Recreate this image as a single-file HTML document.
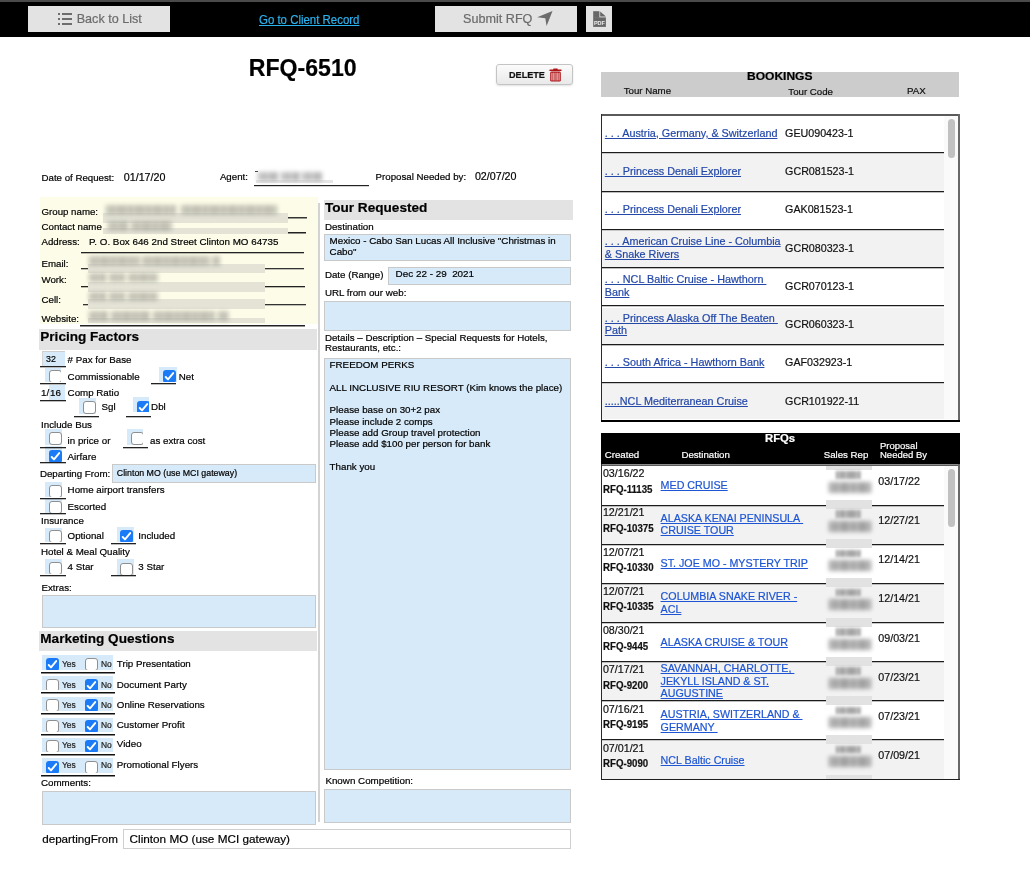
<!DOCTYPE html>
<html><head><meta charset="utf-8">
<style>
html,body{margin:0;padding:0;}
body{will-change:transform;width:1030px;height:870px;overflow:hidden;position:relative;background:#fff;font-family:"Liberation Sans",sans-serif;}
.t{position:absolute;white-space:nowrap;-webkit-text-stroke:0.2px currentColor;font-family:"Liberation Sans",sans-serif;}
a{color:inherit}
</style></head><body>
<div style="position:absolute;left:0px;top:0px;width:1030px;height:2px;background:#4a4a4a"></div><div style="position:absolute;left:0px;top:2px;width:1030px;height:35px;background:#000"></div><div style="position:absolute;left:28px;top:6px;width:142px;height:26px;background:#e3e3e3"></div><div style="position:absolute;left:58px;top:13px;width:2px;height:2px;background:#6e6e6e"></div><div style="position:absolute;left:62px;top:13px;width:10px;height:2px;background:#6e6e6e"></div><div style="position:absolute;left:58px;top:18px;width:2px;height:2px;background:#6e6e6e"></div><div style="position:absolute;left:62px;top:18px;width:10px;height:2px;background:#6e6e6e"></div><div style="position:absolute;left:58px;top:23px;width:2px;height:2px;background:#6e6e6e"></div><div style="position:absolute;left:62px;top:23px;width:10px;height:2px;background:#6e6e6e"></div><div class="t" style="left:76.7px;top:13.03px;font-size:12.6px;line-height:12.6px;font-weight:400;color:#6b6b6b;">Back to List</div><div class="t" style="left:259px;top:14.02px;font-size:12.5px;line-height:12.5px;font-weight:400;color:#2cb3ef;text-decoration:underline;transform:scaleX(0.915);transform-origin:0 0;">Go to Client Record</div><div style="position:absolute;left:435px;top:6px;width:142px;height:26px;background:#e3e3e3"></div><div class="t" style="left:463.1px;top:13.03px;font-size:12.6px;line-height:12.6px;font-weight:400;color:#6b6b6b;">Submit RFQ</div><svg style="position:absolute;left:535px;top:9px" width="20" height="20" viewBox="0 0 20 20"><path d="M17.5 2 L2.2 8.3 L10.3 9.2 L11.6 16.9 Z" fill="#6b6b6b"/></svg><div style="position:absolute;left:586px;top:6px;width:26px;height:26px;background:#e3e3e3"></div><svg style="position:absolute;left:593px;top:11px" width="14" height="17" viewBox="0 0 14 17"><rect x="0.2" y="0.2" width="6.2" height="6.6" fill="#676767"/><path d="M7.2 0.6 L7.2 5.6 L12.9 5.6 Z" fill="#676767"/><rect x="0.2" y="6.4" width="12.7" height="9.5" fill="#676767"/><text x="0.9" y="13.7" textLength="11" lengthAdjust="spacingAndGlyphs" font-family="Liberation Sans" font-size="6.2" font-weight="700" fill="#ececec">PDF</text></svg><div class="t" style="left:248.8px;top:56.65px;font-size:23.1px;line-height:23.1px;font-weight:700;color:#000;">RFQ-6510</div><div style="position:absolute;left:496px;top:64px;width:75px;height:19px;border:1px solid #c4c4c4;border-radius:3px;background:linear-gradient(#fbfbfb,#e9e9e9);box-shadow:0 1px 2px rgba(0,0,0,0.12)"></div><div class="t" style="left:509px;top:70.50px;font-size:9.1px;line-height:9.1px;font-weight:700;color:#111;">DELETE</div><svg style="position:absolute;left:548.5px;top:67.5px" width="14" height="15" viewBox="0 0 14 15"><rect x="4.2" y="0.6" width="4.6" height="1.6" rx="0.7" fill="#ae1519"/><rect x="0.4" y="1.5" width="12.2" height="1.5" rx="0.6" fill="#ae1519"/><rect x="1.2" y="3.6" width="10.6" height="10" rx="1.4" fill="#ae1519"/><rect x="5.6" y="4.6" width="1.9" height="8" fill="#cf6b6d"/><rect x="2.5" y="4.6" width="0.9" height="8" rx="0.4" fill="#fbeaea"/><rect x="4.4" y="4.6" width="0.9" height="8" rx="0.4" fill="#fbeaea"/><rect x="7.7" y="4.6" width="0.9" height="8" rx="0.4" fill="#fbeaea"/><rect x="9.6" y="4.6" width="0.9" height="8" rx="0.4" fill="#fbeaea"/></svg><div class="t" style="left:41.5px;top:173.09px;font-size:9.7px;line-height:9.7px;font-weight:400;color:#000;">Date of Request:</div><div class="t" style="left:123.8px;top:171.94px;font-size:10.7px;line-height:10.7px;font-weight:400;color:#000;">01/17/20</div><div class="t" style="left:219.9px;top:172.39px;font-size:9.7px;line-height:9.7px;font-weight:400;color:#000;">Agent:</div><div style="position:absolute;left:254px;top:185px;width:115px;height:1px;background:#222"></div><div style="position:absolute;left:254px;top:186px;width:115px;height:1px;background:#222;opacity:0.20"></div><div style="position:absolute;left:256px;top:180px;width:77px;height:3px;background:#e6e6e6"></div><div style="position:absolute;left:255px;top:171px;width:3px;height:1px;background:#444"></div><div style="position:absolute;left:258px;top:172px;width:20px;height:9px;background:repeating-linear-gradient(90deg,#8d8d8d 0 2.2px,#cfcfcf 2.2px 3.6px);filter:blur(1.9px);opacity:0.7"></div><div style="position:absolute;left:281px;top:172px;width:19px;height:9px;background:repeating-linear-gradient(90deg,#8d8d8d 0 2.2px,#cfcfcf 2.2px 3.6px);filter:blur(1.9px);opacity:0.7"></div><div style="position:absolute;left:302px;top:172px;width:20px;height:9px;background:repeating-linear-gradient(90deg,#8d8d8d 0 2.2px,#cfcfcf 2.2px 3.6px);filter:blur(1.9px);opacity:0.7"></div><div class="t" style="left:375.6px;top:172.49px;font-size:9.7px;line-height:9.7px;font-weight:400;color:#000;">Proposal Needed by:</div><div class="t" style="left:474.9px;top:171.34px;font-size:10.7px;line-height:10.7px;font-weight:400;color:#000;">02/07/20</div><div style="position:absolute;left:40px;top:197px;width:277.6px;height:127px;background:#fdfce9"></div><div class="t" style="left:41.5px;top:206.59px;font-size:9.7px;line-height:9.7px;font-weight:400;color:#000;">Group name:</div><div class="t" style="left:41.5px;top:221.99px;font-size:9.7px;line-height:9.7px;font-weight:400;color:#000;">Contact name</div><div class="t" style="left:41.5px;top:237.49px;font-size:9.7px;line-height:9.7px;font-weight:400;color:#000;">Address:</div><div class="t" style="left:89.1px;top:237.40px;font-size:9.8px;line-height:9.8px;font-weight:400;color:#000;">P. O. Box 646 2nd Street Clinton MO 64735</div><div style="position:absolute;left:103px;top:213px;width:185px;height:10px;background:#e4e3d6"></div><div style="position:absolute;left:103px;top:228px;width:185px;height:5.5px;background:#e4e3d6"></div><div style="position:absolute;left:106px;top:204.5px;width:70px;height:10px;background:repeating-linear-gradient(90deg,#8e8d84 0 2.2px,#c4c3b8 2.2px 3.6px);filter:blur(2.1px);opacity:0.62"></div><div style="position:absolute;left:181px;top:204.5px;width:96px;height:10px;background:repeating-linear-gradient(90deg,#8e8d84 0 2.2px,#c4c3b8 2.2px 3.6px);filter:blur(2.1px);opacity:0.62"></div><div style="position:absolute;left:108px;top:221px;width:20px;height:10px;background:repeating-linear-gradient(90deg,#8e8d84 0 2.2px,#c4c3b8 2.2px 3.6px);filter:blur(2.1px);opacity:0.62"></div><div style="position:absolute;left:131px;top:221px;width:41px;height:10px;background:repeating-linear-gradient(90deg,#8e8d84 0 2.2px,#c4c3b8 2.2px 3.6px);filter:blur(2.1px);opacity:0.62"></div><div style="position:absolute;left:288px;top:217px;width:19px;height:1px;background:#333"></div><div style="position:absolute;left:288px;top:218px;width:19px;height:1px;background:#333;opacity:0.50"></div><div style="position:absolute;left:288px;top:232px;width:18px;height:1px;background:#222"></div><div style="position:absolute;left:288px;top:233px;width:18px;height:1px;background:#222;opacity:0.50"></div><div style="position:absolute;left:81px;top:252px;width:223px;height:1px;background:#222"></div><div style="position:absolute;left:81px;top:253px;width:223px;height:1px;background:#222;opacity:0.30"></div><div class="t" style="left:41.5px;top:259.19px;font-size:9.7px;line-height:9.7px;font-weight:400;color:#000;">Email:</div><div class="t" style="left:41.5px;top:275.19px;font-size:9.7px;line-height:9.7px;font-weight:400;color:#000;">Work:</div><div class="t" style="left:41.5px;top:294.59px;font-size:9.7px;line-height:9.7px;font-weight:400;color:#000;">Cell:</div><div class="t" style="left:41.5px;top:313.89px;font-size:9.7px;line-height:9.7px;font-weight:400;color:#000;">Website:</div><div style="position:absolute;left:88px;top:254px;width:177px;height:69px;background:#fdfce9"></div><div style="position:absolute;left:88px;top:264px;width:177px;height:9px;background:#e4e3d6"></div><div style="position:absolute;left:88px;top:282px;width:177px;height:10px;background:#e4e3d6"></div><div style="position:absolute;left:88px;top:299px;width:177px;height:9.5px;background:#e4e3d6"></div><div style="position:absolute;left:88px;top:318px;width:177px;height:5px;background:#e4e3d6"></div><div style="position:absolute;left:89px;top:256px;width:51px;height:10px;background:repeating-linear-gradient(90deg,#8e8d84 0 2.2px,#c4c3b8 2.2px 3.6px);filter:blur(2.1px);opacity:0.62"></div><div style="position:absolute;left:142px;top:256px;width:68px;height:10px;background:repeating-linear-gradient(90deg,#8e8d84 0 2.2px,#c4c3b8 2.2px 3.6px);filter:blur(2.1px);opacity:0.62"></div><div style="position:absolute;left:212px;top:256px;width:8px;height:10px;background:repeating-linear-gradient(90deg,#8e8d84 0 2.2px,#c4c3b8 2.2px 3.6px);filter:blur(2.1px);opacity:0.62"></div><div style="position:absolute;left:89px;top:272.5px;width:17px;height:9.5px;background:repeating-linear-gradient(90deg,#8e8d84 0 2.2px,#c4c3b8 2.2px 3.6px);filter:blur(2.1px);opacity:0.62"></div><div style="position:absolute;left:109px;top:272.5px;width:16px;height:9.5px;background:repeating-linear-gradient(90deg,#8e8d84 0 2.2px,#c4c3b8 2.2px 3.6px);filter:blur(2.1px);opacity:0.62"></div><div style="position:absolute;left:128px;top:272.5px;width:30px;height:9.5px;background:repeating-linear-gradient(90deg,#8e8d84 0 2.2px,#c4c3b8 2.2px 3.6px);filter:blur(2.1px);opacity:0.62"></div><div style="position:absolute;left:89px;top:291.5px;width:17px;height:9.5px;background:repeating-linear-gradient(90deg,#8e8d84 0 2.2px,#c4c3b8 2.2px 3.6px);filter:blur(2.1px);opacity:0.62"></div><div style="position:absolute;left:109px;top:291.5px;width:16px;height:9.5px;background:repeating-linear-gradient(90deg,#8e8d84 0 2.2px,#c4c3b8 2.2px 3.6px);filter:blur(2.1px);opacity:0.62"></div><div style="position:absolute;left:128px;top:291.5px;width:30px;height:9.5px;background:repeating-linear-gradient(90deg,#8e8d84 0 2.2px,#c4c3b8 2.2px 3.6px);filter:blur(2.1px);opacity:0.62"></div><div style="position:absolute;left:89px;top:311px;width:19px;height:9.5px;background:repeating-linear-gradient(90deg,#8e8d84 0 2.2px,#c4c3b8 2.2px 3.6px);filter:blur(2.1px);opacity:0.62"></div><div style="position:absolute;left:111px;top:311px;width:39px;height:9.5px;background:repeating-linear-gradient(90deg,#8e8d84 0 2.2px,#c4c3b8 2.2px 3.6px);filter:blur(2.1px);opacity:0.62"></div><div style="position:absolute;left:153px;top:311px;width:62px;height:9.5px;background:repeating-linear-gradient(90deg,#8e8d84 0 2.2px,#c4c3b8 2.2px 3.6px);filter:blur(2.1px);opacity:0.62"></div><div style="position:absolute;left:218px;top:311px;width:11px;height:9.5px;background:repeating-linear-gradient(90deg,#8e8d84 0 2.2px,#c4c3b8 2.2px 3.6px);filter:blur(2.1px);opacity:0.62"></div><div style="position:absolute;left:81px;top:268px;width:7px;height:1px;background:#333"></div><div style="position:absolute;left:81px;top:269px;width:7px;height:1px;background:#333;opacity:0.30"></div><div style="position:absolute;left:265px;top:268px;width:39px;height:1px;background:#333"></div><div style="position:absolute;left:265px;top:269px;width:39px;height:1px;background:#333;opacity:0.30"></div><div style="position:absolute;left:81px;top:286px;width:7px;height:1px;background:#222"></div><div style="position:absolute;left:81px;top:287px;width:7px;height:1px;background:#222;opacity:0.30"></div><div style="position:absolute;left:265px;top:286px;width:40px;height:1px;background:#222"></div><div style="position:absolute;left:265px;top:287px;width:40px;height:1px;background:#222;opacity:0.30"></div><div style="position:absolute;left:83px;top:304px;width:5px;height:1px;background:#333"></div><div style="position:absolute;left:83px;top:305px;width:5px;height:1px;background:#333;opacity:0.30"></div><div style="position:absolute;left:265px;top:304px;width:41px;height:1px;background:#333"></div><div style="position:absolute;left:265px;top:305px;width:41px;height:1px;background:#333;opacity:0.30"></div><div style="position:absolute;left:80px;top:325px;width:225px;height:1px;background:#222"></div><div style="position:absolute;left:80px;top:326px;width:225px;height:1px;background:#222;opacity:0.50"></div><div style="position:absolute;left:318px;top:203px;width:2px;height:619px;background:#d3d3d3"></div><div style="position:absolute;left:39px;top:329px;width:278px;height:21px;background:#e3e3e3"></div><div class="t" style="left:40.3px;top:330.11px;font-size:13.57px;line-height:13.57px;font-weight:700;color:#000;">Pricing Factors</div><div style="position:absolute;left:42px;top:351px;width:22px;height:14px;background:#d7eaf9;border-top:1px solid #cdcdcd;border-left:1px solid #d5d5d5"></div><div class="t" style="left:46px;top:354.95px;font-size:8.8px;line-height:8.8px;font-weight:400;color:#000;">32</div><div style="position:absolute;left:40px;top:366px;width:25.5px;height:1px;background:#222"></div><div style="position:absolute;left:40px;top:367px;width:25.5px;height:1px;background:#222;opacity:0.30"></div><div class="t" style="left:67.6px;top:355.15px;font-size:9.75px;line-height:9.75px;font-weight:400;color:#000;"># Pax for Base</div><div style="position:absolute;left:45px;top:368px;width:16px;height:14px;background:#d7eaf9;overflow:hidden"><div style="position:absolute;left:4px;top:2px;width:11px;height:11px;background:#fff;border:1px solid #8f8f8f;border-radius:3px;"></div></div><div class="t" style="left:67.6px;top:371.65px;font-size:9.75px;line-height:9.75px;font-weight:400;color:#000;">Commissionable</div><div style="position:absolute;left:159px;top:367px;width:18px;height:15px;background:#d7eaf9;overflow:hidden"><div style="position:absolute;left:3.6999999999999886px;top:3px;width:13px;height:13px;background:#1b7bf6;border-radius:3px;"><svg width="13" height="13" viewBox="0 0 13 13" style="position:absolute;left:0;top:0"><path d="M2.7 7.0 L5.0 9.4 L10.2 3.1" stroke="#fff" stroke-width="1.9" fill="none" stroke-linecap="round" stroke-linejoin="round"/></svg></div></div><div class="t" style="left:178.7px;top:371.65px;font-size:9.75px;line-height:9.75px;font-weight:400;color:#000;">Net</div><div style="position:absolute;left:49px;top:385px;width:16px;height:15px;background:#d7eaf9"></div><div class="t" style="left:41px;top:388.10px;font-size:9.8px;line-height:9.8px;font-weight:400;color:#000;">1/</div><div class="t" style="left:50px;top:388.10px;font-size:9.8px;line-height:9.8px;font-weight:400;color:#000;">16</div><div style="position:absolute;left:40px;top:400px;width:25.5px;height:1px;background:#222"></div><div style="position:absolute;left:40px;top:401px;width:25.5px;height:1px;background:#222;opacity:0.30"></div><div class="t" style="left:67.6px;top:388.15px;font-size:9.75px;line-height:9.75px;font-weight:400;color:#000;">Comp Ratio</div><div style="position:absolute;left:79px;top:398px;width:17px;height:16px;background:#d7eaf9;overflow:hidden"><div style="position:absolute;left:4px;top:3px;width:11px;height:11px;background:#fff;border:1px solid #8f8f8f;border-radius:3px;"></div></div><div class="t" style="left:101.5px;top:401.75px;font-size:9.75px;line-height:9.75px;font-weight:400;color:#000;">Sgl</div><div style="position:absolute;left:133px;top:397px;width:16px;height:15px;background:#d7eaf9;overflow:hidden"><div style="position:absolute;left:4px;top:4px;width:13px;height:13px;background:#1b7bf6;border-radius:3px;"><svg width="13" height="13" viewBox="0 0 13 13" style="position:absolute;left:0;top:0"><path d="M2.7 7.0 L5.0 9.4 L10.2 3.1" stroke="#fff" stroke-width="1.9" fill="none" stroke-linecap="round" stroke-linejoin="round"/></svg></div></div><div class="t" style="left:151.1px;top:401.75px;font-size:9.75px;line-height:9.75px;font-weight:400;color:#000;">Dbl</div><div class="t" style="left:41px;top:419.65px;font-size:9.75px;line-height:9.75px;font-weight:400;color:#000;">Include Bus</div><div style="position:absolute;left:45px;top:429px;width:17px;height:16px;background:#d7eaf9;overflow:hidden"><div style="position:absolute;left:4px;top:3px;width:11px;height:11px;background:#fff;border:1px solid #8f8f8f;border-radius:3px;"></div></div><div class="t" style="left:67.6px;top:435.75px;font-size:9.75px;line-height:9.75px;font-weight:400;color:#000;">in price or</div><div style="position:absolute;left:127px;top:429px;width:16px;height:16px;background:#d7eaf9;overflow:hidden"><div style="position:absolute;left:4px;top:3px;width:11px;height:11px;background:#fff;border:1px solid #8f8f8f;border-radius:3px;"></div></div><div class="t" style="left:150px;top:435.75px;font-size:9.75px;line-height:9.75px;font-weight:400;color:#000;">as extra cost</div><div style="position:absolute;left:45px;top:446px;width:17px;height:16px;background:#d7eaf9;overflow:hidden"><div style="position:absolute;left:4px;top:3.5px;width:13px;height:13px;background:#1b7bf6;border-radius:3px;"><svg width="13" height="13" viewBox="0 0 13 13" style="position:absolute;left:0;top:0"><path d="M2.7 7.0 L5.0 9.4 L10.2 3.1" stroke="#fff" stroke-width="1.9" fill="none" stroke-linecap="round" stroke-linejoin="round"/></svg></div></div><div class="t" style="left:67.6px;top:451.75px;font-size:9.75px;line-height:9.75px;font-weight:400;color:#000;">Airfare</div><div class="t" style="left:39.9px;top:469.25px;font-size:9.75px;line-height:9.75px;font-weight:400;color:#000;">Departing From:</div><div style="position:absolute;left:112px;top:464px;width:202px;height:17px;background:#d7eaf9;border:1px solid #c9c9c9"></div><div class="t" style="left:116.8px;top:469.45px;font-size:8.8px;line-height:8.8px;font-weight:400;color:#000;">Clinton MO (use MCI gateway)</div><div style="position:absolute;left:45px;top:482px;width:17px;height:15px;background:#d7eaf9;overflow:hidden"><div style="position:absolute;left:4px;top:3px;width:11px;height:11px;background:#fff;border:1px solid #8f8f8f;border-radius:3px;"></div></div><div class="t" style="left:67.6px;top:484.75px;font-size:9.75px;line-height:9.75px;font-weight:400;color:#000;">Home airport transfers</div><div style="position:absolute;left:45px;top:498px;width:17px;height:15px;background:#d7eaf9;overflow:hidden"><div style="position:absolute;left:4px;top:2.5px;width:11px;height:11px;background:#fff;border:1px solid #8f8f8f;border-radius:3px;"></div></div><div class="t" style="left:67.6px;top:502.25px;font-size:9.75px;line-height:9.75px;font-weight:400;color:#000;">Escorted</div><div class="t" style="left:41px;top:515.85px;font-size:9.75px;line-height:9.75px;font-weight:400;color:#000;">Insurance</div><div style="position:absolute;left:45px;top:528px;width:17px;height:14px;background:#d7eaf9;overflow:hidden"><div style="position:absolute;left:4px;top:2px;width:11px;height:11px;background:#fff;border:1px solid #8f8f8f;border-radius:3px;"></div></div><div class="t" style="left:67.6px;top:530.75px;font-size:9.75px;line-height:9.75px;font-weight:400;color:#000;">Optional</div><div style="position:absolute;left:116.5px;top:527px;width:17px;height:15px;background:#d7eaf9;overflow:hidden"><div style="position:absolute;left:3.9000000000000057px;top:3px;width:13px;height:13px;background:#1b7bf6;border-radius:3px;"><svg width="13" height="13" viewBox="0 0 13 13" style="position:absolute;left:0;top:0"><path d="M2.7 7.0 L5.0 9.4 L10.2 3.1" stroke="#fff" stroke-width="1.9" fill="none" stroke-linecap="round" stroke-linejoin="round"/></svg></div></div><div class="t" style="left:138.3px;top:530.75px;font-size:9.75px;line-height:9.75px;font-weight:400;color:#000;">Included</div><div class="t" style="left:41px;top:547.25px;font-size:9.75px;line-height:9.75px;font-weight:400;color:#000;">Hotel & Meal Quality</div><div style="position:absolute;left:45px;top:559px;width:17px;height:15px;background:#d7eaf9;overflow:hidden"><div style="position:absolute;left:4px;top:2.5px;width:11px;height:11px;background:#fff;border:1px solid #8f8f8f;border-radius:3px;"></div></div><div class="t" style="left:67.6px;top:561.85px;font-size:9.75px;line-height:9.75px;font-weight:400;color:#000;">4 Star</div><div style="position:absolute;left:116.5px;top:559px;width:17px;height:16px;background:#d7eaf9;overflow:hidden"><div style="position:absolute;left:3.9000000000000057px;top:3.5px;width:11px;height:11px;background:#fff;border:1px solid #8f8f8f;border-radius:3px;"></div></div><div class="t" style="left:138.3px;top:561.85px;font-size:9.75px;line-height:9.75px;font-weight:400;color:#000;">3 Star</div><div style="position:absolute;left:40px;top:383px;width:25.5px;height:1px;background:#222"></div><div style="position:absolute;left:40px;top:384px;width:25.5px;height:1px;background:#222;opacity:0.30"></div><div style="position:absolute;left:151px;top:383px;width:25.400000000000006px;height:1px;background:#222"></div><div style="position:absolute;left:151px;top:384px;width:25.400000000000006px;height:1px;background:#222;opacity:0.30"></div><div style="position:absolute;left:74px;top:416px;width:24.599999999999994px;height:1px;background:#222"></div><div style="position:absolute;left:74px;top:417px;width:24.599999999999994px;height:1px;background:#222;opacity:0.30"></div><div style="position:absolute;left:126.3px;top:416px;width:25.200000000000003px;height:1px;background:#222"></div><div style="position:absolute;left:126.3px;top:417px;width:25.200000000000003px;height:1px;background:#222;opacity:0.30"></div><div style="position:absolute;left:40px;top:447px;width:25.5px;height:1px;background:#222"></div><div style="position:absolute;left:40px;top:448px;width:25.5px;height:1px;background:#222;opacity:0.30"></div><div style="position:absolute;left:122.8px;top:447px;width:25.200000000000003px;height:1px;background:#222"></div><div style="position:absolute;left:122.8px;top:448px;width:25.200000000000003px;height:1px;background:#222;opacity:0.30"></div><div style="position:absolute;left:40px;top:462px;width:25.5px;height:1px;background:#222"></div><div style="position:absolute;left:40px;top:463px;width:25.5px;height:1px;background:#222;opacity:0.30"></div><div style="position:absolute;left:40px;top:498px;width:25.5px;height:1px;background:#222"></div><div style="position:absolute;left:40px;top:499px;width:25.5px;height:1px;background:#222;opacity:0.30"></div><div style="position:absolute;left:40px;top:513px;width:25.5px;height:1px;background:#222"></div><div style="position:absolute;left:40px;top:514px;width:25.5px;height:1px;background:#222;opacity:0.30"></div><div style="position:absolute;left:40px;top:543px;width:25.5px;height:1px;background:#222"></div><div style="position:absolute;left:40px;top:544px;width:25.5px;height:1px;background:#222;opacity:0.30"></div><div style="position:absolute;left:110.7px;top:543px;width:25.299999999999997px;height:1px;background:#222"></div><div style="position:absolute;left:110.7px;top:544px;width:25.299999999999997px;height:1px;background:#222;opacity:0.30"></div><div style="position:absolute;left:40px;top:575px;width:25.5px;height:1px;background:#222"></div><div style="position:absolute;left:40px;top:576px;width:25.5px;height:1px;background:#222;opacity:0.30"></div><div style="position:absolute;left:110.7px;top:575px;width:25.299999999999997px;height:1px;background:#222"></div><div style="position:absolute;left:110.7px;top:576px;width:25.299999999999997px;height:1px;background:#222;opacity:0.30"></div><div class="t" style="left:41.4px;top:583.15px;font-size:9.75px;line-height:9.75px;font-weight:400;color:#000;">Extras:</div><div style="position:absolute;left:42px;top:595px;width:272px;height:31px;background:#d7eaf9;border:1px solid #c9c9c9"></div><div style="position:absolute;left:39px;top:631px;width:278px;height:20px;background:#e3e3e3"></div><div class="t" style="left:40.3px;top:631.71px;font-size:13.57px;line-height:13.57px;font-weight:700;color:#000;">Marketing Questions</div><div style="position:absolute;left:42px;top:655.4px;width:71px;height:14.6px;background:#d7eaf9;overflow:hidden"><div style="position:absolute;left:4px;top:2.8px;width:13px;height:13px;background:#1b7bf6;border-radius:3px;"><svg width="13" height="13" viewBox="0 0 13 13" style="position:absolute;left:0;top:0"><path d="M2.7 7.0 L5.0 9.4 L10.2 3.1" stroke="#fff" stroke-width="1.9" fill="none" stroke-linecap="round" stroke-linejoin="round"/></svg></div><div class="t" style="left:20px;top:5.05px;font-size:8.45px;line-height:8.45px;font-weight:400;color:#222;">Yes</div><div style="position:absolute;left:43px;top:2.8px;width:11px;height:11px;background:#fff;border:1px solid #8f8f8f;border-radius:3px;"></div><div class="t" style="left:59px;top:5.05px;font-size:8.45px;line-height:8.45px;font-weight:400;color:#222;">No</div></div><div style="position:absolute;left:41px;top:672px;width:73.7px;height:1px;background:#111"></div><div style="position:absolute;left:41px;top:673px;width:73.7px;height:1px;background:#111;opacity:0.50"></div><div class="t" style="left:116.8px;top:659.33px;font-size:9.77px;line-height:9.77px;font-weight:400;color:#000;">Trip Presentation</div><div style="position:absolute;left:42px;top:676px;width:71px;height:14.3px;background:#d7eaf9;overflow:hidden"><div style="position:absolute;left:4px;top:2.8px;width:11px;height:11px;background:#fff;border:1px solid #8f8f8f;border-radius:3px;"></div><div class="t" style="left:20px;top:4.85px;font-size:8.45px;line-height:8.45px;font-weight:400;color:#222;">Yes</div><div style="position:absolute;left:43px;top:2.8px;width:13px;height:13px;background:#1b7bf6;border-radius:3px;"><svg width="13" height="13" viewBox="0 0 13 13" style="position:absolute;left:0;top:0"><path d="M2.7 7.0 L5.0 9.4 L10.2 3.1" stroke="#fff" stroke-width="1.9" fill="none" stroke-linecap="round" stroke-linejoin="round"/></svg></div><div class="t" style="left:59px;top:4.85px;font-size:8.45px;line-height:8.45px;font-weight:400;color:#222;">No</div></div><div style="position:absolute;left:41px;top:692px;width:73.7px;height:1px;background:#111"></div><div style="position:absolute;left:41px;top:693px;width:73.7px;height:1px;background:#111;opacity:0.50"></div><div class="t" style="left:116.8px;top:679.73px;font-size:9.77px;line-height:9.77px;font-weight:400;color:#000;">Document Party</div><div style="position:absolute;left:42px;top:696.5px;width:71px;height:14.2px;background:#d7eaf9;overflow:hidden"><div style="position:absolute;left:4px;top:2.8px;width:11px;height:11px;background:#fff;border:1px solid #8f8f8f;border-radius:3px;"></div><div class="t" style="left:20px;top:4.15px;font-size:8.45px;line-height:8.45px;font-weight:400;color:#222;">Yes</div><div style="position:absolute;left:43px;top:2.8px;width:13px;height:13px;background:#1b7bf6;border-radius:3px;"><svg width="13" height="13" viewBox="0 0 13 13" style="position:absolute;left:0;top:0"><path d="M2.7 7.0 L5.0 9.4 L10.2 3.1" stroke="#fff" stroke-width="1.9" fill="none" stroke-linecap="round" stroke-linejoin="round"/></svg></div><div class="t" style="left:59px;top:4.15px;font-size:8.45px;line-height:8.45px;font-weight:400;color:#222;">No</div></div><div style="position:absolute;left:41px;top:713px;width:73.7px;height:1px;background:#111"></div><div style="position:absolute;left:41px;top:714px;width:73.7px;height:1px;background:#111;opacity:0.50"></div><div class="t" style="left:116.8px;top:699.53px;font-size:9.77px;line-height:9.77px;font-weight:400;color:#000;">Online Reservations</div><div style="position:absolute;left:42px;top:717.5px;width:71px;height:14.5px;background:#d7eaf9;overflow:hidden"><div style="position:absolute;left:4px;top:2.8px;width:11px;height:11px;background:#fff;border:1px solid #8f8f8f;border-radius:3px;"></div><div class="t" style="left:20px;top:3.55px;font-size:8.45px;line-height:8.45px;font-weight:400;color:#222;">Yes</div><div style="position:absolute;left:43px;top:2.8px;width:13px;height:13px;background:#1b7bf6;border-radius:3px;"><svg width="13" height="13" viewBox="0 0 13 13" style="position:absolute;left:0;top:0"><path d="M2.7 7.0 L5.0 9.4 L10.2 3.1" stroke="#fff" stroke-width="1.9" fill="none" stroke-linecap="round" stroke-linejoin="round"/></svg></div><div class="t" style="left:59px;top:3.55px;font-size:8.45px;line-height:8.45px;font-weight:400;color:#222;">No</div></div><div style="position:absolute;left:41px;top:734px;width:73.7px;height:1px;background:#111"></div><div style="position:absolute;left:41px;top:735px;width:73.7px;height:1px;background:#111;opacity:0.50"></div><div class="t" style="left:116.8px;top:719.93px;font-size:9.77px;line-height:9.77px;font-weight:400;color:#000;">Customer Profit</div><div style="position:absolute;left:42px;top:737.5px;width:71px;height:14.6px;background:#d7eaf9;overflow:hidden"><div style="position:absolute;left:4px;top:2.8px;width:11px;height:11px;background:#fff;border:1px solid #8f8f8f;border-radius:3px;"></div><div class="t" style="left:20px;top:3.05px;font-size:8.45px;line-height:8.45px;font-weight:400;color:#222;">Yes</div><div style="position:absolute;left:43px;top:2.8px;width:13px;height:13px;background:#1b7bf6;border-radius:3px;"><svg width="13" height="13" viewBox="0 0 13 13" style="position:absolute;left:0;top:0"><path d="M2.7 7.0 L5.0 9.4 L10.2 3.1" stroke="#fff" stroke-width="1.9" fill="none" stroke-linecap="round" stroke-linejoin="round"/></svg></div><div class="t" style="left:59px;top:3.05px;font-size:8.45px;line-height:8.45px;font-weight:400;color:#222;">No</div></div><div style="position:absolute;left:41px;top:754px;width:73.7px;height:1px;background:#111"></div><div style="position:absolute;left:41px;top:755px;width:73.7px;height:1px;background:#111;opacity:0.50"></div><div class="t" style="left:116.8px;top:739.43px;font-size:9.77px;line-height:9.77px;font-weight:400;color:#000;">Video</div><div style="position:absolute;left:42px;top:758px;width:71px;height:14.5px;background:#d7eaf9;overflow:hidden"><div style="position:absolute;left:4px;top:2.8px;width:13px;height:13px;background:#1b7bf6;border-radius:3px;"><svg width="13" height="13" viewBox="0 0 13 13" style="position:absolute;left:0;top:0"><path d="M2.7 7.0 L5.0 9.4 L10.2 3.1" stroke="#fff" stroke-width="1.9" fill="none" stroke-linecap="round" stroke-linejoin="round"/></svg></div><div class="t" style="left:20px;top:2.95px;font-size:8.45px;line-height:8.45px;font-weight:400;color:#222;">Yes</div><div style="position:absolute;left:43px;top:2.8px;width:11px;height:11px;background:#fff;border:1px solid #8f8f8f;border-radius:3px;"></div><div class="t" style="left:59px;top:2.95px;font-size:8.45px;line-height:8.45px;font-weight:400;color:#222;">No</div></div><div style="position:absolute;left:41px;top:775px;width:73.7px;height:1px;background:#111"></div><div style="position:absolute;left:41px;top:776px;width:73.7px;height:1px;background:#111;opacity:0.50"></div><div class="t" style="left:116.8px;top:759.83px;font-size:9.77px;line-height:9.77px;font-weight:400;color:#000;">Promotional Flyers</div><div class="t" style="left:41px;top:777.65px;font-size:9.75px;line-height:9.75px;font-weight:400;color:#000;">Comments:</div><div style="position:absolute;left:42px;top:791px;width:272px;height:32px;background:#d7eaf9;border:1px solid #c9c9c9"></div><div class="t" style="left:42.2px;top:833.34px;font-size:11.65px;line-height:11.65px;font-weight:400;color:#000;">departingFrom</div><div style="position:absolute;left:122.5px;top:829px;width:446.5px;height:18px;background:#fff;border:1px solid #cfcfcf"></div><div class="t" style="left:129.6px;top:833.46px;font-size:11.74px;line-height:11.74px;font-weight:400;color:#000;">Clinton MO (use MCI gateway)</div><div style="position:absolute;left:324px;top:200px;width:249px;height:20px;background:#e3e3e3"></div><div class="t" style="left:324.9px;top:200.59px;font-size:13.6px;line-height:13.6px;font-weight:700;color:#000;">Tour Requested</div><div class="t" style="left:324.9px;top:222.35px;font-size:9.75px;line-height:9.75px;font-weight:400;color:#000;">Destination</div><div style="position:absolute;left:324px;top:234px;width:245px;height:25px;background:#d7eaf9;border:1px solid #c9c9c9"></div><div class="t" style="left:329.6px;top:235.92px;font-size:9.78px;line-height:9.78px;font-weight:400;color:#000;">Mexico - Cabo San Lucas All Inclusive "Christmas in</div><div class="t" style="left:329.6px;top:246.82px;font-size:9.78px;line-height:9.78px;font-weight:400;color:#000;">Cabo"</div><div class="t" style="left:324.9px;top:270.45px;font-size:9.75px;line-height:9.75px;font-weight:400;color:#000;">Date (Range)</div><div style="position:absolute;left:388px;top:267px;width:181px;height:16px;background:#d7eaf9;border:1px solid #c9c9c9"></div><div class="t" style="left:395.6px;top:269.02px;font-size:9.9px;line-height:9.9px;font-weight:400;color:#000;">Dec 22 - 29&nbsp; 2021</div><div class="t" style="left:324.9px;top:287.65px;font-size:9.75px;line-height:9.75px;font-weight:400;color:#000;">URL from our web:</div><div style="position:absolute;left:324px;top:301px;width:245px;height:28px;background:#d7eaf9;border:1px solid #c9c9c9"></div><div class="t" style="left:324.9px;top:333.06px;font-size:9.73px;line-height:9.73px;font-weight:400;color:#000;">Details &ndash; Description &ndash; Special Requests for Hotels,</div><div class="t" style="left:324.9px;top:342.56px;font-size:9.73px;line-height:9.73px;font-weight:400;color:#000;">Restaurants, etc.:</div><div style="position:absolute;left:324px;top:358px;width:245px;height:410px;background:#d7eaf9;border:1px solid #c9c9c9"></div><div class="t" style="left:329.6px;top:360.12px;font-size:9.78px;line-height:9.78px;font-weight:400;color:#000;">FREEDOM PERKS</div><div class="t" style="left:329.6px;top:382.72px;font-size:9.78px;line-height:9.78px;font-weight:400;color:#000;">ALL INCLUSIVE RIU RESORT (Kim knows the place)</div><div class="t" style="left:329.6px;top:405.22px;font-size:9.78px;line-height:9.78px;font-weight:400;color:#000;">Please base on 30+2 pax</div><div class="t" style="left:329.6px;top:416.62px;font-size:9.78px;line-height:9.78px;font-weight:400;color:#000;">Please include 2 comps</div><div class="t" style="left:329.6px;top:427.82px;font-size:9.78px;line-height:9.78px;font-weight:400;color:#000;">Please add Group travel protection</div><div class="t" style="left:329.6px;top:438.62px;font-size:9.78px;line-height:9.78px;font-weight:400;color:#000;">Please add $100 per person for bank</div><div class="t" style="left:329.6px;top:461.52px;font-size:9.78px;line-height:9.78px;font-weight:400;color:#000;">Thank you</div><div class="t" style="left:325.4px;top:776.40px;font-size:9.8px;line-height:9.8px;font-weight:400;color:#000;">Known Competition:</div><div style="position:absolute;left:324px;top:789px;width:245px;height:32px;background:#d7eaf9;border:1px solid #c9c9c9"></div><div style="position:absolute;left:601px;top:72px;width:358px;height:25px;background:#cccccc"></div><div class="t" style="left:747.4px;top:72.37px;font-size:10.2px;line-height:10.2px;font-weight:700;color:#000;transform:scaleX(1.18);transform-origin:0 0;">BOOKINGS</div><div class="t" style="left:623.7px;top:86.19px;font-size:9.7px;line-height:9.7px;font-weight:400;color:#111;">Tour Name</div><div class="t" style="left:788.3px;top:86.69px;font-size:9.7px;line-height:9.7px;font-weight:400;color:#111;">Tour Code</div><div class="t" style="left:907px;top:86.19px;font-size:9.7px;line-height:9.7px;font-weight:400;color:#111;">PAX</div><div style="position:absolute;left:601px;top:114px;width:359px;height:2px;background:#5a5a5a"></div><div style="position:absolute;left:601px;top:114px;width:1px;height:308px;background:#2a2a2a"></div><div style="position:absolute;left:958px;top:114px;width:2px;height:308px;background:#686868"></div><div style="position:absolute;left:601px;top:420px;width:359px;height:2px;background:#000"></div><div style="position:absolute;left:602px;top:116px;width:356px;height:303px;overflow:hidden;background:#fff"><div style="position:absolute;left:0px;top:0.0px;width:342px;height:38.3px;background:#fff"></div><div class="t" style="left:2.7999999999999545px;top:11.56px;font-size:10.8px;line-height:10.8px;font-weight:400;color:#2448a8;text-decoration:underline;">. . . Austria, Germany, &amp; Switzerland</div><div class="t" style="left:183.10000000000002px;top:11.64px;font-size:10.7px;line-height:10.7px;font-weight:400;color:#111;">GEU090423-1</div><div style="position:absolute;left:0px;top:38.30000000000001px;width:342px;height:38.3px;background:#f2f2f2"></div><div class="t" style="left:2.7999999999999545px;top:49.86px;font-size:10.8px;line-height:10.8px;font-weight:400;color:#2448a8;text-decoration:underline;">. . . Princess Denali Explorer</div><div class="t" style="left:183.10000000000002px;top:49.94px;font-size:10.7px;line-height:10.7px;font-weight:400;color:#111;">GCR081523-1</div><div style="position:absolute;left:0px;top:76.6px;width:342px;height:38.3px;background:#fff"></div><div class="t" style="left:2.7999999999999545px;top:88.16px;font-size:10.8px;line-height:10.8px;font-weight:400;color:#2448a8;text-decoration:underline;">. . . Princess Denali Explorer</div><div class="t" style="left:183.10000000000002px;top:88.24px;font-size:10.7px;line-height:10.7px;font-weight:400;color:#111;">GAK081523-1</div><div style="position:absolute;left:0px;top:114.89999999999998px;width:342px;height:38.3px;background:#f2f2f2"></div><div class="t" style="left:2.7999999999999545px;top:119.96px;font-size:10.8px;line-height:10.8px;font-weight:400;color:#2448a8;text-decoration:underline;">. . . American Cruise Line - Columbia</div><div class="t" style="left:2.7999999999999545px;top:132.86px;font-size:10.8px;line-height:10.8px;font-weight:400;color:#2448a8;text-decoration:underline;">&amp; Snake Rivers</div><div class="t" style="left:183.10000000000002px;top:126.54px;font-size:10.7px;line-height:10.7px;font-weight:400;color:#111;">GCR080323-1</div><div style="position:absolute;left:0px;top:153.2px;width:342px;height:38.3px;background:#fff"></div><div class="t" style="left:2.7999999999999545px;top:158.26px;font-size:10.8px;line-height:10.8px;font-weight:400;color:#2448a8;text-decoration:underline;">. . . NCL Baltic Cruise - Hawthorn&nbsp;</div><div class="t" style="left:2.7999999999999545px;top:171.16px;font-size:10.8px;line-height:10.8px;font-weight:400;color:#2448a8;text-decoration:underline;">Bank</div><div class="t" style="left:183.10000000000002px;top:164.84px;font-size:10.7px;line-height:10.7px;font-weight:400;color:#111;">GCR070123-1</div><div style="position:absolute;left:0px;top:191.5px;width:342px;height:38.3px;background:#f2f2f2"></div><div class="t" style="left:2.7999999999999545px;top:196.56px;font-size:10.8px;line-height:10.8px;font-weight:400;color:#2448a8;text-decoration:underline;">. . . Princess Alaska Off The Beaten&nbsp;</div><div class="t" style="left:2.7999999999999545px;top:209.46px;font-size:10.8px;line-height:10.8px;font-weight:400;color:#2448a8;text-decoration:underline;">Path</div><div class="t" style="left:183.10000000000002px;top:203.14px;font-size:10.7px;line-height:10.7px;font-weight:400;color:#111;">GCR060323-1</div><div style="position:absolute;left:0px;top:229.79999999999995px;width:342px;height:38.3px;background:#fff"></div><div class="t" style="left:2.7999999999999545px;top:241.36px;font-size:10.8px;line-height:10.8px;font-weight:400;color:#2448a8;text-decoration:underline;">. . . South Africa - Hawthorn Bank</div><div class="t" style="left:183.10000000000002px;top:241.44px;font-size:10.7px;line-height:10.7px;font-weight:400;color:#111;">GAF032923-1</div><div style="position:absolute;left:0px;top:268.09999999999997px;width:342px;height:38.3px;background:#f2f2f2"></div><div class="t" style="left:2.7999999999999545px;top:279.66px;font-size:10.8px;line-height:10.8px;font-weight:400;color:#2448a8;text-decoration:underline;">.....NCL Mediterranean Cruise</div><div class="t" style="left:183.10000000000002px;top:279.74px;font-size:10.7px;line-height:10.7px;font-weight:400;color:#111;">GCR101922-11</div><div style="position:absolute;left:0px;top:36px;width:342px;height:1px;background:#1c1c1c"></div><div style="position:absolute;left:0px;top:37px;width:342px;height:1px;background:rgba(0,0,0,0.22)"></div><div style="position:absolute;left:0px;top:75px;width:342px;height:1px;background:#1c1c1c"></div><div style="position:absolute;left:0px;top:76px;width:342px;height:1px;background:rgba(0,0,0,0.22)"></div><div style="position:absolute;left:0px;top:113px;width:342px;height:1px;background:#1c1c1c"></div><div style="position:absolute;left:0px;top:114px;width:342px;height:1px;background:rgba(0,0,0,0.22)"></div><div style="position:absolute;left:0px;top:151px;width:342px;height:1px;background:#1c1c1c"></div><div style="position:absolute;left:0px;top:152px;width:342px;height:1px;background:rgba(0,0,0,0.22)"></div><div style="position:absolute;left:0px;top:189px;width:342px;height:1px;background:#1c1c1c"></div><div style="position:absolute;left:0px;top:190px;width:342px;height:1px;background:rgba(0,0,0,0.22)"></div><div style="position:absolute;left:0px;top:228px;width:342px;height:1px;background:#1c1c1c"></div><div style="position:absolute;left:0px;top:229px;width:342px;height:1px;background:rgba(0,0,0,0.22)"></div><div style="position:absolute;left:0px;top:266px;width:342px;height:1px;background:#1c1c1c"></div><div style="position:absolute;left:0px;top:267px;width:342px;height:1px;background:rgba(0,0,0,0.22)"></div><div style="position:absolute;left:342px;top:0px;width:14px;height:310px;background:#fafafa"></div><div style="position:absolute;left:346px;top:2.5px;width:7.3px;height:39px;background:#c1c1c1;border-radius:4px"></div></div><div style="position:absolute;left:601px;top:433px;width:359px;height:31px;background:#000"></div><div class="t" style="left:765.3px;top:433.87px;font-size:10.2px;line-height:10.2px;font-weight:700;color:#fff;transform:scaleX(1.11);transform-origin:0 0;">RFQs</div><div class="t" style="left:604.7px;top:449.89px;font-size:9.7px;line-height:9.7px;font-weight:400;color:#fff;">Created</div><div class="t" style="left:681.4px;top:449.89px;font-size:9.7px;line-height:9.7px;font-weight:400;color:#fff;">Destination</div><div class="t" style="left:823.7px;top:449.89px;font-size:9.7px;line-height:9.7px;font-weight:400;color:#fff;">Sales Rep</div><div class="t" style="left:880px;top:441.36px;font-size:9.5px;line-height:9.5px;font-weight:400;color:#fff;">Proposal</div><div class="t" style="left:880px;top:450.06px;font-size:9.5px;line-height:9.5px;font-weight:400;color:#fff;">Needed By</div><div style="position:absolute;left:601px;top:464px;width:359px;height:1px;background:#8c8c8c"></div><div style="position:absolute;left:601px;top:465px;width:359px;height:1px;background:#5c5c5c"></div><div style="position:absolute;left:601px;top:464px;width:1px;height:316px;background:#2a2a2a"></div><div style="position:absolute;left:958px;top:464px;width:2px;height:316px;background:#686868"></div><div style="position:absolute;left:601px;top:779px;width:359px;height:1px;background:#1e1e1e"></div><div style="position:absolute;left:602px;top:466px;width:356px;height:313px;overflow:hidden;background:#fff"><div style="position:absolute;left:0px;top:0.0px;width:342px;height:39.25px;background:#fff"></div><div class="t" style="left:0.8999999999999773px;top:2.14px;font-size:10.7px;line-height:10.7px;font-weight:400;color:#111;">03/16/22</div><div class="t" style="left:0.8999999999999773px;top:18.58px;font-size:10.3px;line-height:10.3px;font-weight:700;color:#111;transform:scaleX(0.94);transform-origin:0 0;">RFQ-11135</div><div class="t" style="left:58.60000000000002px;top:13.84px;font-size:10.7px;line-height:10.7px;font-weight:400;color:#1d55d4;text-decoration:underline;">MED CRUISE</div><div class="t" style="left:276.29999999999995px;top:9.74px;font-size:10.7px;line-height:10.7px;font-weight:400;color:#111;">03/17/22</div><div style="position:absolute;left:0px;top:39.25px;width:342px;height:39.25px;background:#f2f2f2"></div><div class="t" style="left:0.8999999999999773px;top:41.39px;font-size:10.7px;line-height:10.7px;font-weight:400;color:#111;">12/21/21</div><div class="t" style="left:0.8999999999999773px;top:57.83px;font-size:10.3px;line-height:10.3px;font-weight:700;color:#111;transform:scaleX(0.94);transform-origin:0 0;">RFQ-10375</div><div class="t" style="left:58.60000000000002px;top:46.99px;font-size:10.7px;line-height:10.7px;font-weight:400;color:#1d55d4;text-decoration:underline;">ALASKA KENAI PENINSULA&nbsp;</div><div class="t" style="left:58.60000000000002px;top:59.49px;font-size:10.7px;line-height:10.7px;font-weight:400;color:#1d55d4;text-decoration:underline;">CRUISE TOUR</div><div class="t" style="left:276.29999999999995px;top:48.99px;font-size:10.7px;line-height:10.7px;font-weight:400;color:#111;">12/27/21</div><div style="position:absolute;left:0px;top:78.5px;width:342px;height:39.25px;background:#fff"></div><div class="t" style="left:0.8999999999999773px;top:80.64px;font-size:10.7px;line-height:10.7px;font-weight:400;color:#111;">12/07/21</div><div class="t" style="left:0.8999999999999773px;top:97.08px;font-size:10.3px;line-height:10.3px;font-weight:700;color:#111;transform:scaleX(0.94);transform-origin:0 0;">RFQ-10330</div><div class="t" style="left:58.60000000000002px;top:92.34px;font-size:10.7px;line-height:10.7px;font-weight:400;color:#1d55d4;text-decoration:underline;">ST. JOE MO - MYSTERY TRIP</div><div class="t" style="left:276.29999999999995px;top:88.24px;font-size:10.7px;line-height:10.7px;font-weight:400;color:#111;">12/14/21</div><div style="position:absolute;left:0px;top:117.75px;width:342px;height:39.25px;background:#f2f2f2"></div><div class="t" style="left:0.8999999999999773px;top:119.89px;font-size:10.7px;line-height:10.7px;font-weight:400;color:#111;">12/07/21</div><div class="t" style="left:0.8999999999999773px;top:136.33px;font-size:10.3px;line-height:10.3px;font-weight:700;color:#111;transform:scaleX(0.94);transform-origin:0 0;">RFQ-10335</div><div class="t" style="left:58.60000000000002px;top:125.49px;font-size:10.7px;line-height:10.7px;font-weight:400;color:#1d55d4;text-decoration:underline;">COLUMBIA SNAKE RIVER -</div><div class="t" style="left:58.60000000000002px;top:137.99px;font-size:10.7px;line-height:10.7px;font-weight:400;color:#1d55d4;text-decoration:underline;">ACL</div><div class="t" style="left:276.29999999999995px;top:127.49px;font-size:10.7px;line-height:10.7px;font-weight:400;color:#111;">12/14/21</div><div style="position:absolute;left:0px;top:157.0px;width:342px;height:39.25px;background:#fff"></div><div class="t" style="left:0.8999999999999773px;top:159.14px;font-size:10.7px;line-height:10.7px;font-weight:400;color:#111;">08/30/21</div><div class="t" style="left:0.8999999999999773px;top:175.58px;font-size:10.3px;line-height:10.3px;font-weight:700;color:#111;transform:scaleX(0.94);transform-origin:0 0;">RFQ-9445</div><div class="t" style="left:58.60000000000002px;top:170.84px;font-size:10.7px;line-height:10.7px;font-weight:400;color:#1d55d4;text-decoration:underline;">ALASKA CRUISE &amp; TOUR</div><div class="t" style="left:276.29999999999995px;top:166.74px;font-size:10.7px;line-height:10.7px;font-weight:400;color:#111;">09/03/21</div><div style="position:absolute;left:0px;top:196.25px;width:342px;height:39.25px;background:#f2f2f2"></div><div class="t" style="left:0.8999999999999773px;top:198.39px;font-size:10.7px;line-height:10.7px;font-weight:400;color:#111;">07/17/21</div><div class="t" style="left:0.8999999999999773px;top:214.83px;font-size:10.3px;line-height:10.3px;font-weight:700;color:#111;transform:scaleX(0.94);transform-origin:0 0;">RFQ-9200</div><div class="t" style="left:58.60000000000002px;top:197.39px;font-size:10.7px;line-height:10.7px;font-weight:400;color:#1d55d4;text-decoration:underline;">SAVANNAH, CHARLOTTE,&nbsp;</div><div class="t" style="left:58.60000000000002px;top:209.89px;font-size:10.7px;line-height:10.7px;font-weight:400;color:#1d55d4;text-decoration:underline;">JEKYLL ISLAND &amp; ST.</div><div class="t" style="left:58.60000000000002px;top:222.39px;font-size:10.7px;line-height:10.7px;font-weight:400;color:#1d55d4;text-decoration:underline;">AUGUSTINE</div><div class="t" style="left:276.29999999999995px;top:205.99px;font-size:10.7px;line-height:10.7px;font-weight:400;color:#111;">07/23/21</div><div style="position:absolute;left:0px;top:235.5px;width:342px;height:39.25px;background:#fff"></div><div class="t" style="left:0.8999999999999773px;top:237.64px;font-size:10.7px;line-height:10.7px;font-weight:400;color:#111;">07/16/21</div><div class="t" style="left:0.8999999999999773px;top:254.08px;font-size:10.3px;line-height:10.3px;font-weight:700;color:#111;transform:scaleX(0.94);transform-origin:0 0;">RFQ-9195</div><div class="t" style="left:58.60000000000002px;top:243.24px;font-size:10.7px;line-height:10.7px;font-weight:400;color:#1d55d4;text-decoration:underline;">AUSTRIA, SWITZERLAND &amp;&nbsp;</div><div class="t" style="left:58.60000000000002px;top:255.74px;font-size:10.7px;line-height:10.7px;font-weight:400;color:#1d55d4;text-decoration:underline;">GERMANY&nbsp;</div><div class="t" style="left:276.29999999999995px;top:245.24px;font-size:10.7px;line-height:10.7px;font-weight:400;color:#111;">07/23/21</div><div style="position:absolute;left:0px;top:274.75px;width:342px;height:39.25px;background:#f2f2f2"></div><div class="t" style="left:0.8999999999999773px;top:276.89px;font-size:10.7px;line-height:10.7px;font-weight:400;color:#111;">07/01/21</div><div class="t" style="left:0.8999999999999773px;top:293.33px;font-size:10.3px;line-height:10.3px;font-weight:700;color:#111;transform:scaleX(0.94);transform-origin:0 0;">RFQ-9090</div><div class="t" style="left:58.60000000000002px;top:288.59px;font-size:10.7px;line-height:10.7px;font-weight:400;color:#1d55d4;text-decoration:underline;">NCL Baltic Cruise</div><div class="t" style="left:276.29999999999995px;top:284.49px;font-size:10.7px;line-height:10.7px;font-weight:400;color:#111;">07/09/21</div><div style="position:absolute;left:0px;top:39px;width:342px;height:1px;background:#1c1c1c"></div><div style="position:absolute;left:0px;top:40px;width:342px;height:1px;background:rgba(0,0,0,0.22)"></div><div style="position:absolute;left:0px;top:78px;width:342px;height:1px;background:#1c1c1c"></div><div style="position:absolute;left:0px;top:79px;width:342px;height:1px;background:rgba(0,0,0,0.22)"></div><div style="position:absolute;left:0px;top:117px;width:342px;height:1px;background:#1c1c1c"></div><div style="position:absolute;left:0px;top:118px;width:342px;height:1px;background:rgba(0,0,0,0.22)"></div><div style="position:absolute;left:0px;top:156px;width:342px;height:1px;background:#1c1c1c"></div><div style="position:absolute;left:0px;top:157px;width:342px;height:1px;background:rgba(0,0,0,0.22)"></div><div style="position:absolute;left:0px;top:195px;width:342px;height:1px;background:#1c1c1c"></div><div style="position:absolute;left:0px;top:196px;width:342px;height:1px;background:rgba(0,0,0,0.22)"></div><div style="position:absolute;left:0px;top:234px;width:342px;height:1px;background:#1c1c1c"></div><div style="position:absolute;left:0px;top:235px;width:342px;height:1px;background:rgba(0,0,0,0.22)"></div><div style="position:absolute;left:0px;top:273px;width:342px;height:1px;background:#1c1c1c"></div><div style="position:absolute;left:0px;top:274px;width:342px;height:1px;background:rgba(0,0,0,0.22)"></div><div style="position:absolute;left:224.29999999999995px;top:-5.5px;width:46px;height:9px;background:#e2e2e2"></div><div style="position:absolute;left:234px;top:5.0px;width:25px;height:7.5px;background:repeating-linear-gradient(90deg,#7e7e7e 0 2.2px,#c4c4c4 2.2px 3.6px);filter:blur(1.6px);opacity:0.8"></div><div style="position:absolute;left:227px;top:15.5px;width:42px;height:11px;background:repeating-linear-gradient(90deg,#6e6e6e 0 2.2px,#bdbdbd 2.2px 3.6px);filter:blur(2px);opacity:0.72"></div><div style="position:absolute;left:224.29999999999995px;top:33.75px;width:46px;height:9px;background:#e2e2e2"></div><div style="position:absolute;left:234px;top:44.25px;width:25px;height:7.5px;background:repeating-linear-gradient(90deg,#7e7e7e 0 2.2px,#c4c4c4 2.2px 3.6px);filter:blur(1.6px);opacity:0.8"></div><div style="position:absolute;left:227px;top:54.75px;width:42px;height:11px;background:repeating-linear-gradient(90deg,#6e6e6e 0 2.2px,#bdbdbd 2.2px 3.6px);filter:blur(2px);opacity:0.72"></div><div style="position:absolute;left:224.29999999999995px;top:73.0px;width:46px;height:9px;background:#e2e2e2"></div><div style="position:absolute;left:234px;top:83.5px;width:25px;height:7.5px;background:repeating-linear-gradient(90deg,#7e7e7e 0 2.2px,#c4c4c4 2.2px 3.6px);filter:blur(1.6px);opacity:0.8"></div><div style="position:absolute;left:227px;top:94.0px;width:42px;height:11px;background:repeating-linear-gradient(90deg,#6e6e6e 0 2.2px,#bdbdbd 2.2px 3.6px);filter:blur(2px);opacity:0.72"></div><div style="position:absolute;left:224.29999999999995px;top:112.25px;width:46px;height:9px;background:#e2e2e2"></div><div style="position:absolute;left:234px;top:122.75px;width:25px;height:7.5px;background:repeating-linear-gradient(90deg,#7e7e7e 0 2.2px,#c4c4c4 2.2px 3.6px);filter:blur(1.6px);opacity:0.8"></div><div style="position:absolute;left:227px;top:133.25px;width:42px;height:11px;background:repeating-linear-gradient(90deg,#6e6e6e 0 2.2px,#bdbdbd 2.2px 3.6px);filter:blur(2px);opacity:0.72"></div><div style="position:absolute;left:224.29999999999995px;top:151.5px;width:46px;height:9px;background:#e2e2e2"></div><div style="position:absolute;left:234px;top:162.0px;width:25px;height:7.5px;background:repeating-linear-gradient(90deg,#7e7e7e 0 2.2px,#c4c4c4 2.2px 3.6px);filter:blur(1.6px);opacity:0.8"></div><div style="position:absolute;left:227px;top:172.5px;width:42px;height:11px;background:repeating-linear-gradient(90deg,#6e6e6e 0 2.2px,#bdbdbd 2.2px 3.6px);filter:blur(2px);opacity:0.72"></div><div style="position:absolute;left:224.29999999999995px;top:190.75px;width:46px;height:9px;background:#e2e2e2"></div><div style="position:absolute;left:234px;top:201.25px;width:25px;height:7.5px;background:repeating-linear-gradient(90deg,#7e7e7e 0 2.2px,#c4c4c4 2.2px 3.6px);filter:blur(1.6px);opacity:0.8"></div><div style="position:absolute;left:227px;top:211.75px;width:42px;height:11px;background:repeating-linear-gradient(90deg,#6e6e6e 0 2.2px,#bdbdbd 2.2px 3.6px);filter:blur(2px);opacity:0.72"></div><div style="position:absolute;left:224.29999999999995px;top:230.0px;width:46px;height:9px;background:#e2e2e2"></div><div style="position:absolute;left:234px;top:240.5px;width:25px;height:7.5px;background:repeating-linear-gradient(90deg,#7e7e7e 0 2.2px,#c4c4c4 2.2px 3.6px);filter:blur(1.6px);opacity:0.8"></div><div style="position:absolute;left:227px;top:251.0px;width:42px;height:11px;background:repeating-linear-gradient(90deg,#6e6e6e 0 2.2px,#bdbdbd 2.2px 3.6px);filter:blur(2px);opacity:0.72"></div><div style="position:absolute;left:224.29999999999995px;top:269.25px;width:46px;height:9px;background:#e2e2e2"></div><div style="position:absolute;left:234px;top:279.75px;width:25px;height:7.5px;background:repeating-linear-gradient(90deg,#7e7e7e 0 2.2px,#c4c4c4 2.2px 3.6px);filter:blur(1.6px);opacity:0.8"></div><div style="position:absolute;left:227px;top:290.25px;width:42px;height:11px;background:repeating-linear-gradient(90deg,#6e6e6e 0 2.2px,#bdbdbd 2.2px 3.6px);filter:blur(2px);opacity:0.72"></div><div style="position:absolute;left:224.29999999999995px;top:308.5px;width:46px;height:9px;background:#e2e2e2"></div><div style="position:absolute;left:234px;top:319.0px;width:25px;height:7.5px;background:repeating-linear-gradient(90deg,#7e7e7e 0 2.2px,#c4c4c4 2.2px 3.6px);filter:blur(1.6px);opacity:0.8"></div><div style="position:absolute;left:227px;top:329.5px;width:42px;height:11px;background:repeating-linear-gradient(90deg,#6e6e6e 0 2.2px,#bdbdbd 2.2px 3.6px);filter:blur(2px);opacity:0.72"></div><div style="position:absolute;left:342px;top:0px;width:14px;height:320px;background:#fafafa"></div><div style="position:absolute;left:346px;top:3.3px;width:7.3px;height:57.5px;background:#c1c1c1;border-radius:4px"></div></div></body></html>
